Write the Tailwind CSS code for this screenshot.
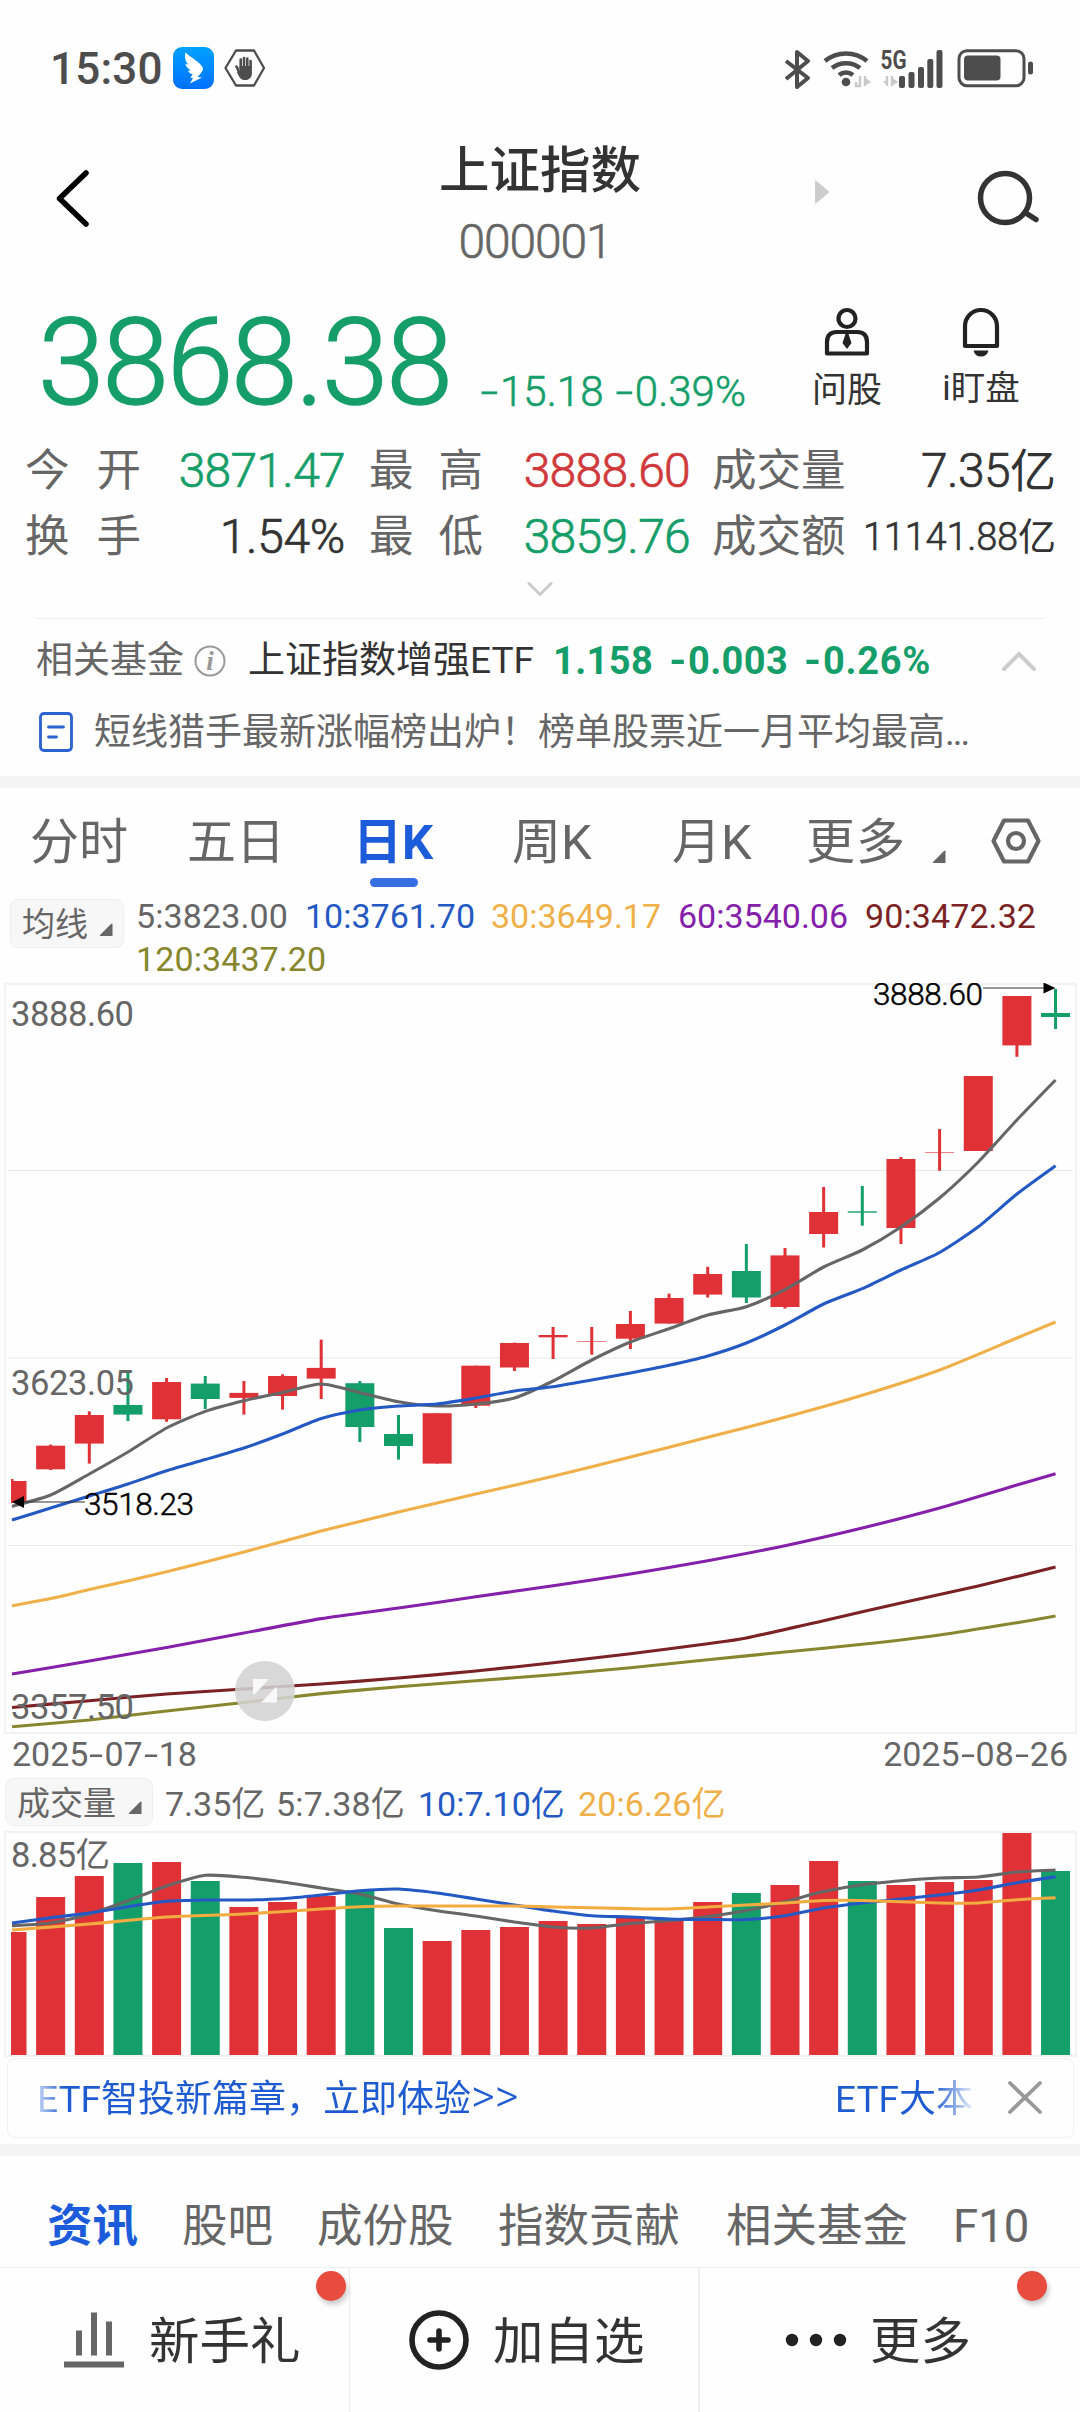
<!DOCTYPE html>
<html lang="zh-CN">
<head>
<meta charset="utf-8">
<title>上证指数 000001</title>
<script src="https://cdn.jsdelivr.net/npm/@tailwindcss/browser@4"></script>
</head>
<body class="bg-white">
<div class="w-[1080px] h-[2412px] overflow-hidden bg-[#fefefe] font-['Roboto','Noto_Sans_CJK_SC',sans-serif] text-[#666] whitespace-nowrap flex flex-col">

  <!-- status bar -->
  <div class="h-[136px] shrink-0 flex items-center pl-[50px] pr-[44px] text-[#4d4d4d]">
    <span class="w-[123px] text-[44px] leading-none font-medium tracking-[0.2px] pt-[2px]">15:30</span>
    <svg class="w-[41px] h-[42px]" viewBox="0 0 41 42">
      <defs><linearGradient id="ding" x1="0" y1="0" x2="0" y2="1"><stop offset="0" stop-color="#00a2ff"/><stop offset="1" stop-color="#0070ff"/></linearGradient></defs>
      <rect width="41" height="42" rx="9" fill="url(#ding)"/>
      <path d="M12.500 5.500 C16 9.500 29 16 30 21.500 C30 24 27 27.500 24.500 30 L29 30.500 L17 36.500 L20 31 L17.500 31 L19.500 27 C17.500 26.800 15.500 25.500 15 23.500 L18 23.500 C15 21.500 13 19.500 12.300 17 L15.500 17.500 C11.800 14 11.500 10 12.500 5.500 Z" fill="#fff"/>
    </svg>
    <svg class="w-[42px] h-[40px] ml-[10px]" viewBox="0 0 42 40" fill="none" stroke="#4d4d4d">
      <path d="M12 2.500 H30 L40 20 L30 37.500 H12 L1.500 20 Z" stroke-width="2.300" stroke-linejoin="round"/>
      <path d="M16.700 20 V11.500 M20 19 V10 M23.300 19 V10.500 M26.600 20 V13 M12.500 18.500 L15.500 25" stroke-width="2.600" stroke-linecap="round"/>
      <path d="M15.500 18 H27.900 V26 C27.500 30 24.500 32 21 32 C17 32 15 29.500 13 24 L15.500 23 Z" fill="#4d4d4d" stroke="none"/>
    </svg>
    <svg class="w-[254px] h-[44px] ml-auto overflow-visible" viewBox="782 46 254 44" fill="none" stroke="#4d4d4d">
      <path d="M786 61 L808 78 L797 87 V52 L808 61 L786 79" stroke-width="4" stroke-linejoin="round"/>
      <path d="M825 61 A33 33 0 0 1 867 61 M832 68 A23 23 0 0 1 860 68 M839 75 A11.500 11.500 0 0 1 853 75" stroke-width="4.600"/>
      <circle cx="846" cy="82" r="4.300" fill="#4d4d4d" stroke="none"/>
      <path d="M860 76 V86 H856 V82 M865 76 V86 M865 79 L869 82 L865 84" stroke="#c9c9c9" stroke-width="2.400"/>
      <path d="M887 76 V86 M884 82 H887 M892 76 V86 M892 79 L896 82 L892 84" stroke="#c9c9c9" stroke-width="2.400"/>
      <text x="880.500" y="68.500" font-size="26" font-weight="700" fill="#4d4d4d" stroke="none" textLength="26" lengthAdjust="spacingAndGlyphs">5G</text>
      <g fill="#4d4d4d" stroke="none"><rect x="899" y="76" width="6" height="12" rx="2"/><rect x="908.500" y="72" width="6" height="16" rx="2"/><rect x="918" y="67" width="6" height="21" rx="2"/><rect x="927.300" y="59" width="6" height="29" rx="2"/><rect x="936.500" y="50" width="6" height="38" rx="2"/></g>
      <rect x="959" y="50.700" width="65" height="35" rx="8" stroke-width="3"/>
      <rect x="964" y="55.500" width="36.500" height="25" rx="4" fill="#4d4d4d" stroke="none"/>
      <rect x="1028" y="61.500" width="5" height="13" rx="2.500" fill="#4d4d4d" stroke="none"/>
    </svg>
  </div>

  <!-- title bar -->
  <div class="h-[154px] shrink-0 flex items-start">
    <svg class="w-[40px] h-[64px] ml-[53px] mt-[30px]" viewBox="53 166 40 64"><path d="M86 173 L59.500 198.500 L86 224" fill="none" stroke="#000" stroke-width="5.500" stroke-linecap="round" stroke-linejoin="round"/></svg>
    <div class="w-[268px] ml-[313px] flex flex-col items-center">
      <span class="h-[66px] leading-[69px] text-[50.500px] font-medium text-[#333]">上证指数</span>
      <span class="h-[78px] leading-[80px] text-[48px] font-light [-webkit-text-stroke:0.600px_currentColor] tracking-[-1.100px] pr-[10px]">000001</span>
    </div>
    <svg class="w-[16px] h-[26px] ml-[140px] mt-[43px]" viewBox="0 0 16 26"><path d="M1 2.500 Q1 1 2.500 2 L14.500 12 Q15.500 13 14.500 14 L2.500 24 Q1 25 1 23.500 Z" fill="#ccc"/></svg>
    <svg class="w-[64px] h-[60px] ml-[146px] mt-[32px]" viewBox="976 168 64 60" fill="none" stroke="#333" stroke-width="5.500"><circle cx="1005" cy="198" r="24.500"/><path d="M1025 212.500 L1036 219.500" stroke-linecap="round"/></svg>
  </div>

  <!-- price -->
  <div class="h-[146px] shrink-0 flex text-[#169e6a]">
    <span class="w-[438px] ml-[38px] text-[120px] leading-[147px] font-light [-webkit-text-stroke:1.600px_currentColor] tracking-[-2.200px]">3868.38</span>
    <span class="w-[324px] ml-[3px] mt-[78px] h-[48px] leading-[48px] text-[42px] font-light [-webkit-text-stroke:0.600px_currentColor] tracking-[0.050px]"><span class="inline-block w-[21px] text-center scale-x-[1.500]">-</span>15.18 <span class="inline-block w-[21px] text-center scale-x-[1.500]">-</span>0.39%</span>
    <div class="w-[90px] flex flex-col items-center text-[#222] pt-[16px] -ml-[1px]">
      <svg class="w-[48px] h-[52px]" viewBox="0 0 48 52" fill="none" stroke="#222" stroke-width="4.200"><circle cx="24" cy="12.500" r="8.500"/><path d="M4 47.500 V36 Q4 26 14 26 H34 Q44 26 44 36 V47.500 Z" stroke-linejoin="round"/><path d="M22.500 28 H25.500 L28.500 37 L24 43 L19.500 37 Z" fill="#222" stroke="none"/></svg>
      <span class="h-[48px] leading-[48px] mt-[9px] text-[35px] text-[#333]">问股</span>
    </div>
    <div class="w-[90px] ml-[44px] flex flex-col items-center text-[#222] pt-[16px]">
      <svg class="w-[48px] h-[52px]" viewBox="0 0 48 52" fill="none" stroke="#222" stroke-width="4.200"><path d="M8 40 V20 A16 16 0 0 1 40 20 V40 Z" stroke-linejoin="round"/><path d="M16.500 44.500 H31.500 Q30 50.500 24 50.500 Q18 50.500 16.500 44.500 Z" fill="#222" stroke="none"/></svg>
      <span class="h-[48px] leading-[48px] mt-[6px] text-[34.500px] text-[#333]">i盯盘</span>
    </div>
  </div>

  <!-- key figures -->
  <div class="h-[132px] shrink-0 px-[25px] grid grid-cols-[116px_204px_24px_114px_207px_22px_135px_209px] auto-rows-[66px] leading-[70px] text-[44.500px]">
    <span class="flex justify-between"><i class="not-italic">今</i><i class="not-italic">开</i></span>
    <span class="text-right text-[48px] font-light [-webkit-text-stroke:0.700px_currentColor] tracking-[-0.700px] text-[#169e6a]">3871.47</span><span></span>
    <span class="flex justify-between"><i class="not-italic">最</i><i class="not-italic">高</i></span>
    <span class="text-right text-[48px] font-light [-webkit-text-stroke:0.700px_currentColor] tracking-[-0.700px] text-[#d0393c]">3888.60</span><span></span>
    <span>成交量</span>
    <span class="text-right text-[#333] text-[46px]"><span class="text-[48px] font-light [-webkit-text-stroke:0.700px_currentColor] tracking-[-0.600px]">7.35</span>亿</span>

    <span class="flex justify-between"><i class="not-italic">换</i><i class="not-italic">手</i></span>
    <span class="text-right text-[48px] font-light [-webkit-text-stroke:0.700px_currentColor] tracking-[-0.300px] text-[#333]">1.54%</span><span></span>
    <span class="flex justify-between"><i class="not-italic">最</i><i class="not-italic">低</i></span>
    <span class="text-right text-[48px] font-light [-webkit-text-stroke:0.700px_currentColor] tracking-[-0.700px] text-[#169e6a]">3859.76</span><span></span>
    <span>成交额</span>
    <span class="text-right text-[#333] text-[38px]"><span class="font-light [-webkit-text-stroke:0.600px_currentColor] tracking-[-0.200px]">11141.88</span>亿</span>
  </div>
  <div class="h-[50px] shrink-0 flex justify-center pt-[12px]">
    <svg class="w-[30px] h-[20px]" viewBox="0 0 30 20"><path d="M4 3.500 L15 14.500 L26 3.500" fill="none" stroke="#ccc" stroke-width="3" stroke-linecap="round"/></svg>
  </div>

  <!-- related fund and news -->
  <div class="h-[158px] shrink-0 mx-[36px] border-t border-[#eee] text-[37px]">
    <div class="h-[84px] flex items-center">
      <span class="w-[158px]">相关基金</span>
      <svg class="w-[32px] h-[32px]" viewBox="0 0 32 32"><circle cx="16" cy="16" r="14.500" fill="none" stroke="#999" stroke-width="2"/><text x="16" y="25" text-anchor="middle" font-family="Liberation Serif" font-style="italic" font-weight="700" font-size="27" fill="#999">i</text></svg>
      <span class="w-[305px] ml-[22px] text-[#333] text-[37px]">上证指数增强ETF</span>
      <div class="w-[383px] flex text-[38px] font-bold text-[#169e6a] tracking-[0.400px]"><span class="w-[115px]">1.158</span><span class="w-[135px]"><span class="inline-block w-[20px] text-center scale-x-[1.150]">-</span>0.003</span><span class="tracking-[0.700px]"><span class="inline-block w-[20px] text-center scale-x-[1.150]">-</span>0.26%</span></div>
      <svg class="w-[40px] h-[24px] ml-[63px]" viewBox="0 0 40 24"><path d="M5 20 L20 5 L35 20" fill="none" stroke="#ccc" stroke-width="4" stroke-linecap="round"/></svg>
    </div>
    <div class="h-[60px] flex items-center">
      <svg class="w-[36px] h-[42px] ml-[2px] -mt-[2px]" viewBox="0 0 36 42" fill="none" stroke="#2a62cf" stroke-width="2.800" stroke-linecap="round"><rect x="2.500" y="2.500" width="31" height="37" rx="3.500"/><path d="M10.500 16 H25.500 M10.500 26 H18.500"/></svg>
      <span class="ml-[20px]">短线猎手最新涨幅榜出炉！榜单股票近一月平均最高<span class="tracking-[-2px]">...</span></span>
    </div>
  </div>
  <div class="h-[12px] shrink-0 bg-[#f4f4f4]"></div>

  <!-- period tabs -->
  <div class="h-[106px] shrink-0 flex leading-[109px] text-[49px] pl-[30px]">
    <span class="w-[157px]">分时</span>
    <span class="w-[166px]">五日</span>
    <div class="w-[159px] relative font-bold text-[#1c5cdb]">日K<span class="absolute left-[17px] top-[90px] w-[48px] h-[9px] rounded-full bg-[#366fe2]"></span></div>
    <span class="w-[160px]">周K</span>
    <span class="w-[134px]">月K</span>
    <span class="w-[126px] tracking-[1px]">更多</span>
    <svg class="w-[14px] h-[14px] mt-[62px]" viewBox="0 0 14 14"><path d="M13.500 1 V13 H2 Q0 13 1.500 11.500 L12 1 Q13.500 0 13.500 1 Z" fill="#666"/></svg>
    <svg class="w-[52px] h-[50px] ml-[44px] mt-[28px]" viewBox="0 0 52 50" fill="none" stroke="#666" stroke-width="4.200" stroke-linejoin="round"><path d="M14 4.500 H38 L48.500 25 L38 45.500 H14 L3.500 25 Z"/><circle cx="26" cy="25" r="8"/></svg>
  </div>

  <!-- moving-average legend -->
  <div class="h-[89px] shrink-0 flex items-start pl-[10px]">
    <div class="w-[114px] h-[49px] mt-[5px] border border-[#eee] rounded-[8px] bg-[#f7f7f7] flex items-center pl-[11px]">
      <span class="w-[77px] text-[33px] leading-[46px] pt-[2px]">均线</span>
      <svg class="w-[14px] h-[14px] mt-[12px]" viewBox="0 0 14 14"><path d="M13.500 1 V13 H2 Q0 13 1.500 11.500 L12 1 Q13.500 0 13.500 1 Z" fill="#666"/></svg>
    </div>
    <div class="ml-[12px] pt-[1px] text-[34px] leading-[43px]">
      <div class="flex"><span class="w-[169px] tracking-[0.100px]">5:3823.00</span><span class="w-[186px] text-[#2459c4]">10:3761.70</span><span class="w-[187px] text-[#efb04a]">30:3649.17</span><span class="w-[187px] text-[#8420aa]">60:3540.06</span><span class="text-[#7b2323] tracking-[0.100px]">90:3472.32</span></div>
      <div class="text-[#86862d] tracking-[0.100px]">120:3437.20</div>
    </div>
  </div>

  <!-- candlestick chart -->
  <svg id="kline" class="w-[1080px] h-[752px] shrink-0" viewBox="0 983 1080 752" fill="none">
    <path d="M5 984 H1076 V1733 H5 Z" stroke="#eee" stroke-width="1.500"/>
    <path d="M8 1170.500 H1073 M8 1358 H1073 M8 1545.500 H1073" stroke="#e8e8e8" stroke-width="1"/>
    <g id="candles"></g>
    <g id="averages" stroke-width="3.100"></g>
    <g fill="#666" font-size="34.500"><text x="11" y="1026" textLength="123">3888.60</text><text x="11" y="1395" textLength="123">3623.05</text><text x="11" y="1719" textLength="123">3357.50</text></g>
    <g fill="#000" stroke="#000" stroke-width=".5" font-size="31.500" font-weight="300"><text x="873" y="1005" textLength="110">3888.60</text><text x="84" y="1515" textLength="110">3518.23</text></g>
    <path d="M983 988 H1044 M24 1502 H85" stroke="#333" stroke-width="1.200"/>
    <path d="M1043.500 982.500 L1055.500 988 L1043.500 993.500 Z M24 1496 L12 1502 L24 1508 Z" fill="#000"/>
    <circle cx="265" cy="1691" r="30" fill="#d3d3d3" fill-opacity=".88"/>
    <path d="M253 1679 H269 L254.500 1694.500 H253 Z M277 1702.500 H261 L275.500 1687.500 H277 Z" fill="#f8f8f8"/>
  </svg>
  <div class="h-[43px] shrink-0 px-[12px] flex justify-between text-[34px] leading-[39px]"><span>2025<span class="inline-block w-[16px] text-center scale-x-[1.500]">-</span>07<span class="inline-block w-[16px] text-center scale-x-[1.500]">-</span>18</span><span>2025<span class="inline-block w-[16px] text-center scale-x-[1.500]">-</span>08<span class="inline-block w-[16px] text-center scale-x-[1.500]">-</span>26</span></div>

  <!-- volume legend -->
  <div class="h-[52px] shrink-0 flex items-start pl-[5px] text-[33px]">
    <div class="w-[148px] h-[48px] border border-[#eee] rounded-[9px] bg-[#f7f7f7] flex items-center pl-[11px]">
      <span class="w-[111px] leading-[44px] pt-[3px]">成交量</span>
      <svg class="w-[14px] h-[14px] mt-[12px]" viewBox="0 0 14 14"><path d="M13.500 1 V13 H2 Q0 13 1.500 11.500 L12 1 Q13.500 0 13.500 1 Z" fill="#666"/></svg>
    </div>
    <div class="flex ml-[12px] text-[34px] leading-[52px]"><span class="w-[111px]">7.35亿</span><span class="w-[142px] tracking-[0.200px]">5:7.38亿</span><span class="w-[160px] text-[#2459c4]">10:7.10亿</span><span class="text-[#efb04a] tracking-[0.100px]">20:6.26亿</span></div>
  </div>

  <!-- volume chart -->
  <svg class="w-[1080px] h-[228px] shrink-0" viewBox="0 1830 1080 228" fill="none">
    <path d="M5 1832 H1076 V2056 H5 Z" stroke="#eee" stroke-width="1.500"/>
    <g id="bars"></g>
    <g id="volumeAverages" stroke-width="3.100"></g>
    <text x="11" y="1867" fill="#666" font-size="34.500" textLength="99">8.85亿</text>
  </svg>

  <!-- promotion strip -->
  <div class="h-[80px] w-[1067px] ml-[7px] shrink-0 border border-[#f0f0f0] rounded-[8px] flex items-center text-[37px] text-[#1f5bd0]">
    <span class="w-[799px] ml-[28px] pl-[1px] pt-[3px] bg-gradient-to-r from-[#1f5bd0]/20 from-0% to-[#1f5bd0] to-[3.500%] bg-clip-text text-transparent">ETF智投新篇章，立即体验<span class="text-[46px] leading-[40px] font-light">&gt;&gt;</span></span>
    <span class="w-[141px] pt-[3px] bg-gradient-to-r from-[#1f5bd0] from-70% to-[#1f5bd0]/10 to-[98%] bg-clip-text text-transparent">ETF大本</span>
    <svg class="w-[38px] h-[38px] ml-[30px]" viewBox="0 0 38 38"><path d="M4 4 L34 33 M34 4 L4 33" stroke="#999" stroke-width="3.800" stroke-linecap="round"/></svg>
  </div>
  <div class="h-[6px] shrink-0"></div>
  <div class="h-[12px] shrink-0 bg-[#f4f4f4]"></div>

  <!-- content tabs -->
  <div class="h-[111px] shrink-0 flex leading-[141px] text-[45.500px] pl-[47px]">
    <span class="w-[135px] font-bold text-[#1c5cdb]">资讯</span><span class="w-[135px]">股吧</span><span class="w-[181px]">成份股</span><span class="w-[228px]">指数贡献</span><span class="w-[227px]">相关基金</span><span>F10</span>
  </div>

  <!-- bottom actions -->
  <div class="h-[145px] shrink-0 flex border-t border-[#eee] text-[50.500px] text-[#333] leading-[144px]">
    <div class="w-[350px] relative border-r border-[#eee] flex items-center pl-[64px]">
      <svg class="w-[60px] h-[56px]" viewBox="0 0 60 56" fill="#666"><path d="M12 18.500 H18 V43.500 H12 Z M27 .5 H33 V43.500 H27 Z M42 9.500 H48 V43.500 H42 Z M0 49.500 H60 V55.500 H0 Z"/></svg>
      <span class="ml-[25px] pt-[3px]">新手礼</span>
      <span class="absolute left-[316px] top-[3px] w-[30px] h-[30px] rounded-full bg-[#e74c3f] shadow-[2px_4px_5px_#0003]"></span>
    </div>
    <div class="w-[350px] border-r-2 border-[#eee] flex items-center pl-[58px]">
      <svg class="w-[62px] h-[62px]" viewBox="0 0 62 62" fill="none" stroke="#222" stroke-width="5.600"><circle cx="31" cy="31" r="27"/><path d="M31 22 V40 M22 31 H40" stroke-linecap="round"/></svg>
      <span class="ml-[23px] pt-[3px]">加自选</span>
    </div>
    <div class="w-[380px] relative flex items-center pl-[85px]">
      <svg class="w-[62px] h-[14px]" viewBox="0 0 62 14" fill="#222"><circle cx="7" cy="7" r="6.200"/><circle cx="31" cy="7" r="6.200"/><circle cx="55" cy="7" r="6.200"/></svg>
      <span class="ml-[23px] pt-[3px]">更多</span>
      <span class="absolute left-[317px] top-[3px] w-[30px] h-[30px] rounded-full bg-[#e74c3f] shadow-[2px_4px_5px_#0003]"></span>
    </div>
  </div>
</div>

<script>
  const NS = 'http://www.w3.org/2000/svg';
  const RED = '#e03136', GREEN = '#149e6a';
  const cx = i => 12 + 38.65 * i;
  function add(parent, tag, attrs) {
    const el = document.createElementNS(NS, tag);
    for (const k in attrs) el.setAttribute(k, attrs[k]);
    document.getElementById(parent).appendChild(el);
  }
  function box(parent, x0, y0, x1, y1, fill) {
    x0 = Math.max(x0, 11);
    add(parent, 'rect', { x: x0, y: y0, width: x1 - x0, height: y1 - y0, fill });
  }
  const down = new Set([3, 5, 9, 10, 19, 22, 27]);

  // each session: high, body top, body bottom, low
  const sessions = [
    [1479,1481,1502,1503],[1444.6,1445.7,1469.3,1470],[1411.4,1415,1443.6,1463.6],[1370.7,1405,1414.6,1421],
    [1378,1382,1419.3,1421.8],[1376,1383.6,1399,1409],[1381,1392.9,1397.9,1414.6],[1374.3,1376,1396,1409.6],
    [1339.6,1367.9,1378.6,1399],[1381,1383.2,1427,1442],[1415,1434,1446,1459.6],[1413.2,1413.2,1463.6,1463.6],
    [1365.7,1365.7,1405.7,1408],[1342.6,1343,1367.5,1371],[1327,1335,1337.3,1359],[1327,1341,1341.6,1354.7],
    [1311,1324,1338.7,1349],[1293.6,1298,1323.6,1323.6],[1266.8,1274,1294.6,1297.5],[1244,1271,1297.5,1303],
    [1248,1255.4,1307,1308.6],[1187,1212,1234,1247.5],[1186,1211.3,1212.7,1225.7],[1157,1159,1228,1244],
    [1129,1152.2,1152.8,1170.7],[1076,1076,1151,1151],[996,996,1045.4,1056.8],[989,1013,1017,1029]
  ];
  sessions.forEach(([hi, top, bot, lo], i) => {
    const c = down.has(i) ? GREEN : RED;
    box('candles', cx(i) - 1.5, hi, cx(i) + 1.5, lo, c);
    box('candles', cx(i) - 14.5, top, cx(i) + 14.5, bot, c);
  });

  // smooth curve through the points
  function curve(parent, pts, stroke) {
    let d = `M${pts[0][0]} ${pts[0][1]}`;
    for (let i = 0; i < pts.length - 1; i++) {
      const a = pts[i - 1] || pts[i], b = pts[i], c = pts[i + 1], e = pts[i + 2] || c;
      d += ` C${b[0] + (c[0] - a[0]) / 9} ${b[1] + (c[1] - a[1]) / 9} ${c[0] - (e[0] - b[0]) / 9} ${c[1] - (e[1] - b[1]) / 9} ${c[0]} ${c[1]}`;
    }
    add(parent, 'path', { d, stroke });
  }
  const daily = ys => ys.map((y, i) => [cx(i), y]);
  const sparse = o => Object.keys(o).map(k => [cx(+k), o[k]]);

  curve('averages', sparse({0:1726.8,2:1720,4:1711,6:1702.5,8:1693.6,10:1686.8,12:1680.7,14:1674.7,16:1667.7,18:1659.7,20:1652,22:1644.3,24:1635,26:1622.7,27:1616}), '#87872f');
  curve('averages', sparse({0:1707.5,2:1700.7,4:1694,6:1689,8:1684,10:1678,12:1671,14:1662.7,16:1653.7,18:1643.7,19:1638,21:1620.7,23:1603,25:1586,27:1567}), '#7b2225');
  curve('averages', sparse({0:1674,2:1661,4:1647.5,6:1633,8:1618.6,10:1608,12:1596.8,14:1585.7,16:1574,18:1560.7,20:1545.7,22:1528,24:1508,26:1485,27:1473.7}), '#8420aa');
  curve('averages', sparse({0:1605.7,1:1598.6,2:1589.6,4:1571.8,6:1552,8:1531,10:1512,12:1494,14:1476.3,16:1457,18:1437.3,20:1417.3,22:1395.3,24:1370,26:1338,27:1322}), '#efb04a');
  curve('averages', daily([1506.4,1495,1474,1452,1428,1411.4,1400.7,1392.5,1384,1392.5,1401.8,1406,1404,1398,1381,1360,1342,1328.7,1315,1306.7,1289.6,1267,1250,1227,1198,1162,1120,1080]), '#666');
  curve('averages', daily([1520,1508,1496,1484,1470.7,1459.6,1448,1434,1418.6,1410,1406,1404,1398,1391,1386.7,1380,1373,1365.3,1356,1343,1325,1304,1288.6,1270,1252.5,1226.8,1194,1165.7]), '#2459c4');

  [1932,1897,1876,1863,1862,1881,1907,1902,1896,1890.5,1928,1941,1930,1927,1921,1924,1918,1919.5,1902,1893,1885,1861,1881,1885,1882,1880,1833,1871]
    .forEach((y, i) => box('bars', cx(i) - 14.5, y, cx(i) + 14.5, 2055, down.has(i) ? GREEN : RED));
  curve('volumeAverages', daily([1925.7,1923,1914,1900.7,1886,1875.3,1877.3,1882,1888,1894,1904,1910.7,1916,1922,1927,1928,1923.5,1920.7,1916.6,1910.6,1901.7,1891.6,1884.8,1880.8,1878,1877,1872,1870]), '#666');
  curve('volumeAverages', daily([1923,1917.7,1913,1906.7,1901.3,1900,1900,1898.7,1895,1890.7,1889,1893,1899,1905,1911,1915.8,1917,1919,1919.5,1919.5,1915.8,1908,1903,1899,1895,1890,1882.8,1876.7]), '#2459c4');
  curve('volumeAverages', sparse({0:1930,2:1924,4:1917,6:1914,8:1909,9:1906.7,10:1906,13:1906,14:1907,16:1908.6,17:1909,18:1907,20:1903,21:1900.5,22:1900.5,24:1903,25:1903,26:1899.7,27:1897.7}), '#f3ac40');
</script>
</body>
</html>
